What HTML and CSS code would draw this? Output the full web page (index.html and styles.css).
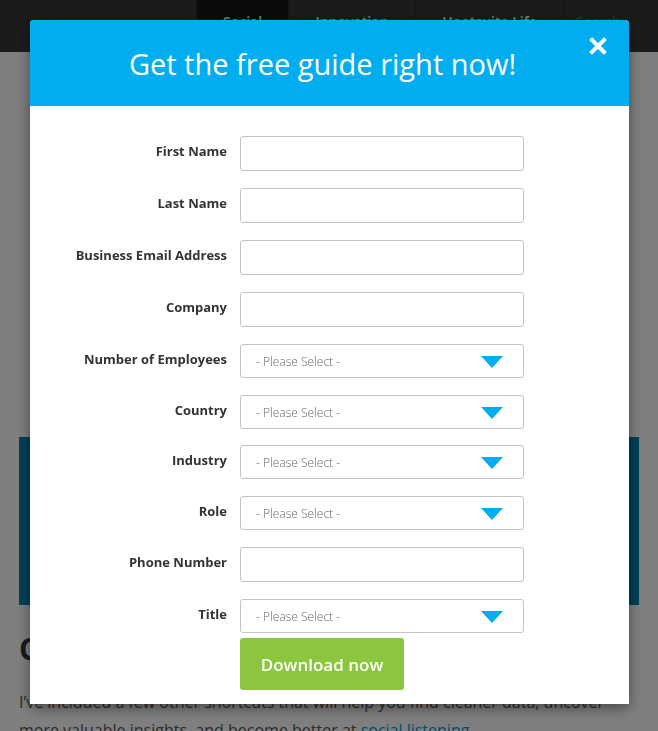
FILE: index.html
```html
<!DOCTYPE html>
<html lang="en">
<head>
<meta charset="utf-8">
<title>Get the free guide</title>
<link rel="stylesheet" href="styles.css">
</head>
<body>
<div class="page">
  <header class="topbar">
    <nav class="nav">
      <a class="nav-item active">Social</a>
      <a class="nav-item">Innovation</a>
      <a class="nav-item">Hootsuite Life</a>
      <a class="nav-item search">Search</a>
    </nav>
  </header>
  <main class="content">
    <div class="hero-box"></div>
    <h2 class="section-title">Conclusion</h2>
    <p class="body-text">I’ve included a few other shortcuts that will help you find cleaner data, uncover more valuable insights, and become better at <a class="link">social listening</a>.</p>
  </main>
</div>

<div class="overlay">
  <div class="modal">
    <div class="modal-header">
      <h1 class="modal-title">Get the free guide right now!</h1>
      <button class="close" aria-label="Close">
        <svg width="18" height="18" viewBox="0 0 18 18"><path d="M3 3 L15 15 M15 3 L3 15" stroke="#fff" stroke-width="4" stroke-linecap="square"/></svg>
      </button>
    </div>
    <form class="form">
      <label class="lbl">First Name</label>
      <div class="field"><input class="input" type="text"></div>
      <label class="lbl">Last Name</label>
      <div class="field"><input class="input" type="text"></div>
      <label class="lbl">Business Email Address</label>
      <div class="field"><input class="input" type="text"></div>
      <label class="lbl">Company</label>
      <div class="field"><input class="input" type="text"></div>
      <label class="lbl">Number of Employees</label>
      <div class="field"><div class="select"><span>- Please Select -</span><i class="arrow"></i></div></div>
      <label class="lbl">Country</label>
      <div class="field"><div class="select"><span>- Please Select -</span><i class="arrow"></i></div></div>
      <label class="lbl tight">Industry</label>
      <div class="field tight"><div class="select"><span>- Please Select -</span><i class="arrow"></i></div></div>
      <label class="lbl">Role</label>
      <div class="field"><div class="select"><span>- Please Select -</span><i class="arrow"></i></div></div>
      <label class="lbl">Phone Number</label>
      <div class="field"><input class="input" type="text"></div>
      <label class="lbl">Title</label>
      <div class="field"><div class="select"><span>- Please Select -</span><i class="arrow"></i></div></div>
      <div class="spacer"></div>
      <div class="field submit-row"><button type="button" class="btn">Download now</button></div>
    </form>
  </div>
</div>
</body>
</html>
```

FILE: styles.css
```css
* { box-sizing: border-box; }
html, body { margin: 0; padding: 0; }
body {
  width: 658px;
  height: 731px;
  overflow: hidden;
  font-family: "Open Sans", "Liberation Sans", sans-serif;
  background: #fff;
  color: #333;
}

/* underlying page */
.topbar {
  height: 52px;
  background: #373737;
  display: flex;
  justify-content: flex-end;
}
.nav { display: flex; height: 52px; }
.nav-item {
  display: block;
  height: 52px;
  padding-top: 10px;
  line-height: 24px;
  font-size: 14px;
  font-weight: 600;
  color: #fff;
  text-align: center;
  border-left: 1px solid #2a2a2a;
}
.nav-item:nth-child(1) { width: 92px; }
.nav-item:nth-child(2) { width: 127px; }
.nav-item:nth-child(3) { width: 148px; }
.nav-item.search { width: 95px; color: #777; text-align: left; padding-left: 12px; font-weight: 400; }
.nav-item.active { background: #161616; }

.content { padding: 0 19px; }
.hero-box {
  margin-top: 385px;
  height: 168px;
  background: #007fae;
}
.section-title {
  margin: 24px 0 0;
  font-size: 30px;
  line-height: 40px;
  font-weight: 700;
  color: #333;
}
.body-text {
  margin: 19px 0 0;
  font-size: 16px;
  line-height: 28px;
  color: #555;
}
.link { color: #0099d6; }

/* overlay + modal */
.overlay {
  position: fixed;
  inset: 0;
  background: rgba(0, 0, 0, 0.5);
  display: flex;
  justify-content: center;
  align-items: flex-start;
  padding-top: 20px;
}
.modal {
  width: 599px;
  background: #fff;
  border-radius: 4px 4px 0 0;
  box-shadow: 0 4px 14px rgba(0, 0, 0, 0.45);
  margin-left: 1px;
}
.modal-header {
  position: relative;
  height: 86px;
  background: #00aeef;
  border-radius: 4px 4px 0 0;
  display: flex;
  align-items: center;
  justify-content: center;
}
.modal-title {
  margin: 0 0 0 -14px;
  font-size: 29px;
  font-weight: 400;
  color: #fff;
}
.close {
  position: absolute;
  right: 22px;
  top: 17px;
  width: 18px;
  height: 18px;
  padding: 0;
  border: 0;
  background: none;
  display: flex;
}

.form {
  display: grid;
  grid-template-columns: 197px 284px;
  column-gap: 13px;
  row-gap: 17px;
  padding: 30px 0 14px;
}
.lbl {
  text-align: right;
  font-size: 13px;
  font-weight: 700;
  color: #333;
  line-height: 30px;
}
.tight { margin-top: -1px; }
.field { display: flex; }
.input {
  width: 284px;
  height: 35px;
  border: 1px solid #c3c3c3;
  border-radius: 3px;
  background: #fff;
  margin: 0;
}
.select {
  width: 284px;
  height: 34px;
  border: 1px solid #c3c3c3;
  border-radius: 3px;
  display: flex;
  align-items: center;
  justify-content: space-between;
  padding: 0 20px 0 15px;
  font-size: 12px;
  font-weight: 300;
  color: #666;
}
.arrow {
  width: 0;
  height: 0;
  border-left: 11.5px solid transparent;
  border-right: 11.5px solid transparent;
  border-top: 12px solid #00aeef;
  margin-top: 2px;
}
.submit-row { margin-top: -12px; }
.btn {
  width: 164px;
  height: 52px;
  border: 0;
  border-radius: 3px;
  background: #8cc63f;
  color: #fff;
  font-family: "Open Sans", "Liberation Sans", sans-serif;
  font-size: 17px;
  font-weight: 600;
  padding: 0;
}
```
